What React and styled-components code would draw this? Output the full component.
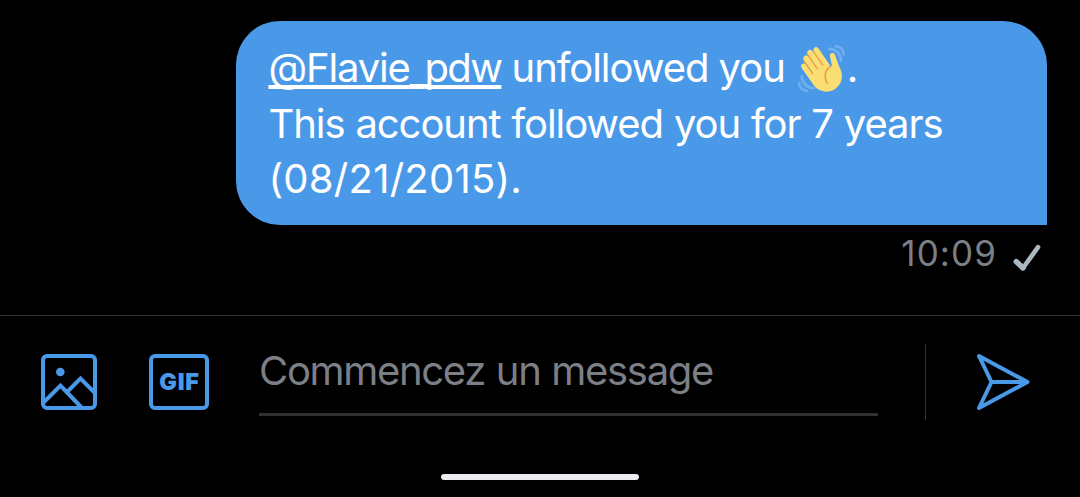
import React from 'react';
import styled, { createGlobalStyle } from 'styled-components';

const Global = createGlobalStyle`
  * { box-sizing: border-box; }
  body { margin: 0; background: #000; }
`;

const Screen = styled.div`
  display: flex;
  flex-direction: column;
  width: 1080px;
  height: 497px;
  overflow: hidden;
  background: #000;
  font-family: Inter, 'Liberation Sans', sans-serif;
`;

const Thread = styled.main`
  display: flex;
  flex-direction: column;
  align-items: flex-end;
  height: 315px;
  padding: 21px 33px 0 0;
`;

const Bubble = styled.div`
  width: 811px;
  height: 204px;
  padding: 19px 33px 0 32.5px;
  border-radius: 44px 44px 0 44px;
  background: #4a99e9;
  color: #fff;
  font-size: 40px;
`;

const Line = styled.div`
  display: flex;
  height: 55.5px;
  line-height: 55.5px;
  white-space: pre;
`;

const Run = styled.span`
  letter-spacing: ${(p) => p.$spacing || 0}px;
  word-spacing: ${(p) => p.$words || 0}px;
`;

const Mention = styled.a`
  text-decoration: underline;
  text-decoration-thickness: 3.5px;
  text-underline-offset: 3px;
  text-decoration-skip-ink: none;
`;

const Underscore = styled(Run)`
  vertical-align: -2px;
  line-height: 1;
`;

const Wave = styled.svg`
  flex: none;
  width: 47px;
  height: 47px;
  margin: 5px 2px 0 13px;
`;

const Status = styled.div`
  display: flex;
  align-items: center;
  height: 56px;
  padding-right: 6px;
  color: #7c7f85;
  font-size: 35px;
  line-height: 55px;
`;

const Tick = styled.svg`
  width: 28px;
  height: 28px;
  margin: 10px 0 0 16px;
`;

const Composer = styled.footer`
  display: flex;
  align-items: flex-start;
  height: 159px;
  padding: 28px 50px 0 41px;
  border-top: 1px solid #303236;
`;

const IconButton = styled.button`
  display: flex;
  align-items: center;
  justify-content: center;
  width: ${(p) => p.$width}px;
  height: 76px;
  margin-left: ${(p) => p.$gap || 0}px;
  padding: 0;
  border: 0;
  background: none;
  color: #4a99e9;
`;

const GifBox = styled.span`
  display: flex;
  align-items: center;
  justify-content: center;
  width: 60px;
  height: 56px;
  padding-left: 1px;
  border: 4px solid currentColor;
  border-radius: 6px;
  font: 900 23.5px/1 Inter, sans-serif;
  letter-spacing: 0.7px;
`;

const Field = styled.div`
  width: 619px;
  height: 72px;
  margin-left: 50px;
  border-bottom: 3px solid #2f3033;
  color: #7c7f85;
  font-size: 40px;
  letter-spacing: -1.32px;
  word-spacing: 0.9px;
  line-height: 54px;
  white-space: nowrap;
`;

const Divider = styled.div`
  width: 1px;
  height: 76px;
  margin: 0 50px 0 47px;
  background: #303236;
`;

const HomeBar = styled.div`
  width: 198px;
  height: 6px;
  margin: 0 auto;
  border-radius: 3px;
  background: #ececf0;
`;

function WavingHand() {
  return (
    <Wave viewBox="0 0 36 36" role="img" aria-label="waving hand">
      <path fill="#e99a4c" d="M4.861 9.147c.94-.657 2.357-.531 3.201.166l-.968-1.407c-.779-1.111-.5-2.313.612-3.093 1.112-.777 4.263 1.312 4.263 1.312-.786-1.122-.639-2.544.483-3.331 1.122-.784 2.67-.513 3.456.611l10.42 14.72L25 31l-11.083-4.042L4.25 12.625c-.793-1.129-.519-2.686.611-3.478z" />
      <path fill="#f9de74" d="M2.695 17.336s-1.132-1.65.519-2.781c1.649-1.131 2.78.518 2.78.518l5.251 7.658c.181-.302.379-.6.6-.894L4.557 11.21s-1.131-1.649.519-2.78c1.649-1.131 2.78.518 2.78.518l6.855 9.997c.255-.208.516-.417.785-.622L7.549 6.732s-1.131-1.649.519-2.78c1.649-1.131 2.78.518 2.78.518l7.947 11.589c.292-.179.581-.334.871-.498L12.238 4.729s-1.131-1.649.518-2.78c1.649-1.131 2.78.518 2.78.518l7.854 11.454 1.194 1.742c-4.948 3.394-5.419 9.779-2.592 13.902.565.825 1.39.26 1.39.26-3.393-4.949-2.357-10.51 2.592-13.903L24.515 8.62s-.545-1.924 1.378-2.47c1.924-.545 2.47 1.379 2.47 1.379l1.685 5.004c.668 1.984 1.379 3.961 2.32 5.831 2.657 5.28 1.07 11.842-3.94 15.279-5.465 3.747-12.936 2.354-16.684-3.11L2.695 17.336z" />
      <path fill="#6fafee" d="M12 32.042C8 32.042 3.958 28 3.958 24c0-.553-.405-1-.958-1s-1.042.447-1.042 1C1.958 30 6 34.042 12 34.042c.553 0 1-.489 1-1.042s-.447-.958-1-.958zM7 34c-3 0-5-2-5-5 0-.553-.447-1-1-1s-1 .447-1 1c0 4 3 7 7 7 .553 0 1-.447 1-1s-.447-1-1-1zM24 2c-.552 0-1 .448-1 1s.448 1 1 1c4 0 8 3.589 8 8 0 .552.448 1 1 1s1-.448 1-1c0-5.514-4-10-10-10zM29 .042c-.552 0-1 .406-1 .958s.448 1.042 1 1.042c3 0 4.958 2.225 4.958 4.958 0 .552.489 1 1.042 1s.958-.448.958-1C35.958 3.163 33 .042 29 .042z" />
    </Wave>
  );
}

export default function App() {
  return (
    <Screen>
      <Global />
      <Thread>
        <Bubble>
          <Line>
            <Mention>
              <Run $spacing={-1.15}>@Flavie</Run>
              <Underscore $spacing={-3.6}>_</Underscore>
              <Run $spacing={-1.6}>pdw</Run>
            </Mention>
            <Run $spacing={-1.05}> unfollowed you</Run>
            <WavingHand />
            <Run>.</Run>
          </Line>
          <Line><Run $spacing={-1.06} $words={0.7}>This account followed you for 7 years</Run></Line>
          <Line><Run $spacing={0.25}>(08/21/2015).</Run></Line>
        </Bubble>
        <Status>
          <Run $spacing={1.1}>10:09</Run>
          <Tick viewBox="0 0 28 28" fill="none" stroke="#aab8c2" strokeLinecap="round" strokeLinejoin="round">
            <path d="M3.200 17.500L10 24" strokeWidth="5.400" />
            <path d="M10 24L25 3.200" strokeWidth="4.600" />
          </Tick>
        </Status>
      </Thread>
      <Composer>
        <IconButton $width={56} aria-label="Photo">
          <svg width="56" height="56" viewBox="0 0 56 56" fill="none" stroke="currentColor" strokeWidth="4">
            <rect x="2" y="2" width="52" height="52" rx="4" />
            <circle cx="19.3" cy="18" r="4.3" fill="currentColor" stroke="none" />
            <path d="M2 49l17.500-17.500L41 54M26 38l13.500-13.500L54 39" />
          </svg>
        </IconButton>
        <IconButton $width={60} $gap={52} aria-label="GIF">
          <GifBox>GIF</GifBox>
        </IconButton>
        <Field>Commencez un message</Field>
        <Divider />
        <IconButton $width={54} aria-label="Send">
          <svg width="54" height="58" viewBox="0 0 54 58" fill="none" stroke="currentColor" strokeWidth="4" strokeLinecap="round" strokeLinejoin="round">
            <path d="M3 3l48.500 26L3 55l12.500-26zM15.500 29H50" />
          </svg>
        </IconButton>
      </Composer>
      <HomeBar />
    </Screen>
  );
}
